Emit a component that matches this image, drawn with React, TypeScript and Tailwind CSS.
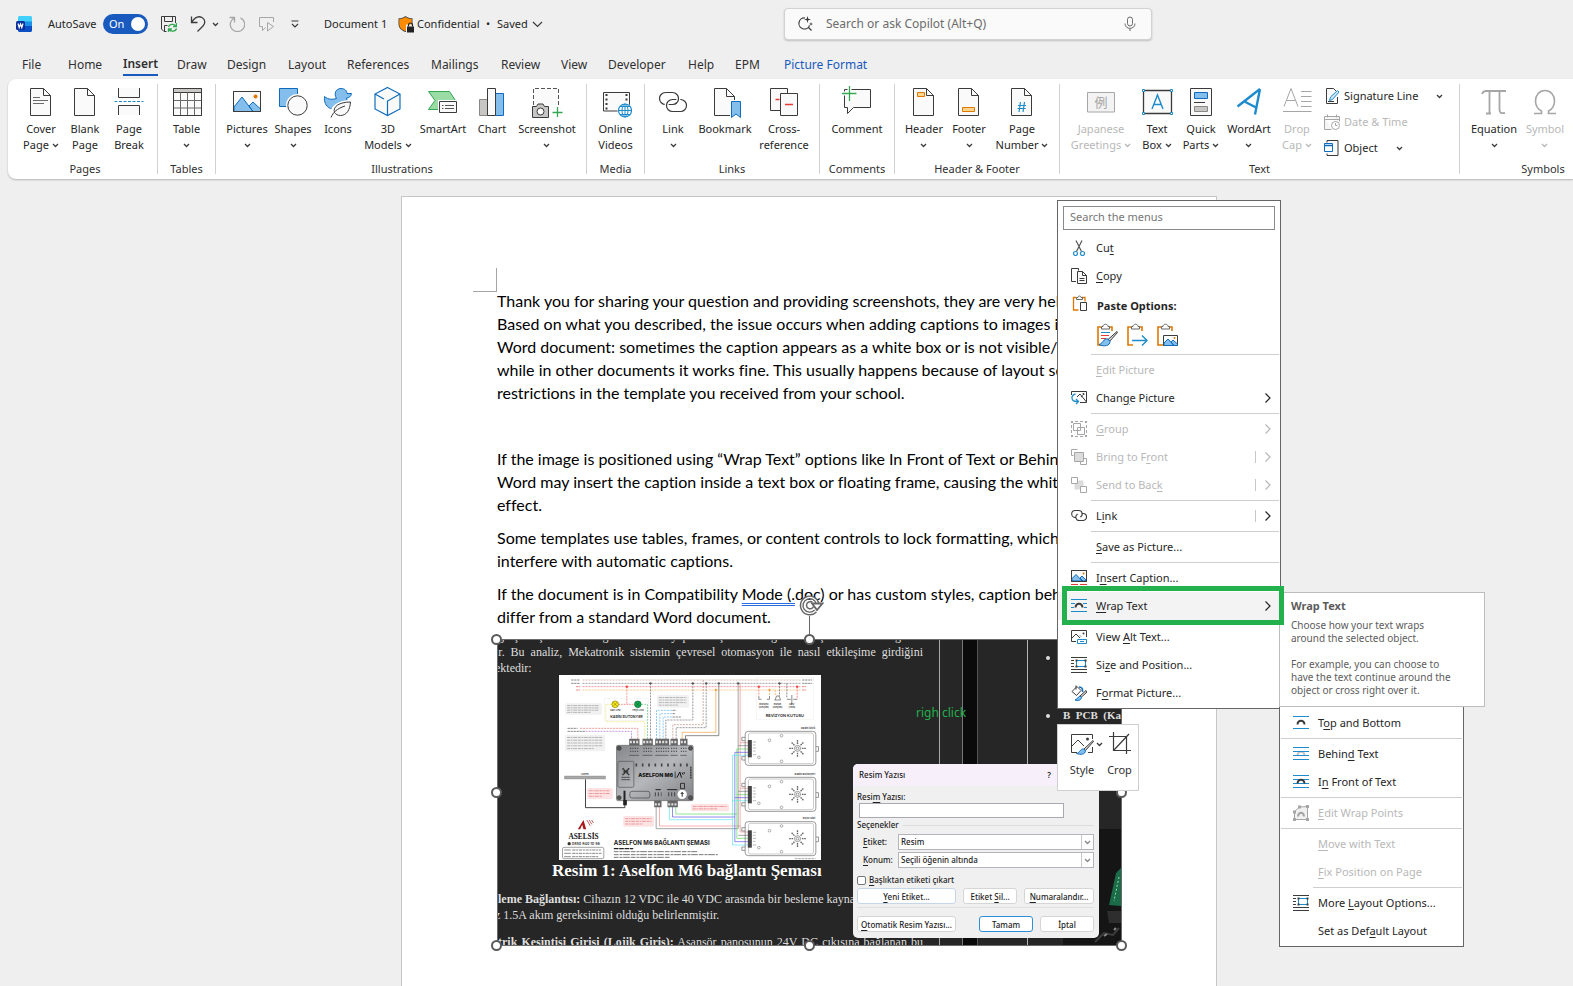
import React from "react";

type Kids = { children?: React.ReactNode };

const INK = "#3b3b3b";
const BLUE = "#1e8bcd";
const DEEP = "#0f6cbd";
const SKY = "#83beec";
const ORANGE = "#e07800";
const GREY = "#a6a6a6";

function Big({ children }: Kids) {
  return (
    <svg width="32" height="32" viewBox="0 0 32 32" fill="none" stroke={INK} strokeWidth="1" aria-hidden="true" className="shrink-0">
      {children}
    </svg>
  );
}

function Small({ children }: Kids) {
  return (
    <svg width="16" height="16" viewBox="0 0 16 16" fill="none" stroke={INK} strokeWidth="1" aria-hidden="true" className="shrink-0">
      {children}
    </svg>
  );
}

function Chevron({ color = INK, wide = false }: { color?: string; wide?: boolean }) {
  return wide ? (
    <svg width="11" height="7" viewBox="0 0 11 7" fill="none" stroke={color} strokeWidth="1.2" aria-hidden="true" className="shrink-0">
      <path d="M1 1l4.5 4.5L10 1" />
    </svg>
  ) : (
    <svg width="7" height="5" viewBox="0 0 7 5" fill="none" stroke={color} strokeWidth="1.3" aria-hidden="true" className="shrink-0">
      <path d="M1 1l2.5 2.5L6 1" />
    </svg>
  );
}

const PAGE = "M5.5 2.5h13l7 7v20h-20z";
const FOLD = "M18.5 2.5v7h7";

const icons = {
  cover: (
    <Big>
      <path d={PAGE} fill="#fafafa" />
      <path d={FOLD} />
      <path d="M8 11.5h7M8 14.5h15M8 17.5h11" stroke="#6b6b6b" />
    </Big>
  ),
  blank: (
    <Big>
      <path d={PAGE} fill="#fafafa" />
      <path d={FOLD} />
    </Big>
  ),
  pageBreak: (
    <Big>
      <path d="M5.5 2v9.5h21V2" fill="#fafafa" />
      <path d="M5.5 29v-9.5h21V29" fill="#fafafa" />
      <path d="M1.5 15.5h29" stroke={BLUE} strokeDasharray="3 1.5" />
    </Big>
  ),
  table: (
    <Big>
      <path d="M2.5 2.5h28v27h-28z" fill="#fafafa" />
      <path d="M2.5 2.5h28v4h-28z" fill="#c8c6c4" />
      <path d="M2.5 14.5h28M2.5 22h28M9.5 6.5v23M16.5 6.5v23M23.5 6.5v23" stroke="#6b6b6b" />
      <path d="M2.5 2.5h28v27h-28z" />
    </Big>
  ),
  pictures: (
    <Big>
      <path d="M2.5 5.5h27v20h-27z" fill="#fafafa" />
      <path d="M3 21l8-10 11 14.5H3zM18 20l4-4 7.5 7v2.5H22z" fill={SKY} stroke={DEEP} />
      <circle cx="24.5" cy="10.5" r="2" fill={ORANGE} stroke="none" />
      <path d="M2.5 5.5h27v20h-27z" />
    </Big>
  ),
  shapes: (
    <Big>
      <path d="M2.5 2.5h18v18h-18z" fill={SKY} stroke={DEEP} />
      <circle cx="20.5" cy="19.5" r="11.5" fill="#fff" stroke="none" />
      <circle cx="20.5" cy="19.5" r="9.7" fill="#fafafa" />
    </Big>
  ),
  icons: (
    <Big>
      <path d="M2.5 10.5c4 3.5 8 3 12 2-3-5-.5-10 4.5-10 4 0 6 2.5 6 5h4.5c-.5 3-2.5 4.5-5 4.5 1 3 .5 5-1 7-3 4-10 5.5-15 3.5-5-2-6.5-7-6-12z" fill={SKY} stroke={DEEP} />
      <path d="M9.5 31c-1-10 7-15.5 20-15.5-1 9-5 14-10.5 14-3.5 0-5-1-6.5-3" fill="#fff" stroke="#fff" strokeWidth="3" />
      <path d="M12.5 26.5c-2-6 5-10.5 16-10.5-.5 8-4 13.5-10 13.5-3 0-4.5-1.2-6-3z" fill="#fafafa" />
      <path d="M9 31.5c2-5 6-9 14-11.5" />
    </Big>
  ),
  cube: (
    <Big>
      <path d="M15.5 1.5l12.5 6.5v15l-12.5 6.5L3 23V8z" fill="#fafafa" stroke={DEEP} strokeWidth="1.2" />
      <path d="M3 8l9 5M28 8l-12.5 7v14.5" stroke={DEEP} strokeWidth="1.2" />
    </Big>
  ),
  smartArt: (
    <Big>
      <path d="M1.5 5.5h21l6 9-6 9h-21l6.5-9z" fill="#9bdca6" stroke="#33a852" />
      <path d="M11 14h21v15H11z" fill="#fff" stroke="none" />
      <path d="M12.5 15.5h17v11h-17z" fill="#fafafa" />
      <path d="M15 19.5h1.5M15 22.5h1.5M18 19.5h9M18 22.5h9" stroke="#555" />
    </Big>
  ),
  chart: (
    <Big>
      <path d="M3.5 13.5h8v16h-8z" fill="#c8c6c4" stroke="#8a8886" />
      <path d="M19.5 7.5h8v22h-8z" fill={SKY} stroke={DEEP} />
      <path d="M11.5 2.5h8v27h-8z" fill="#fafafa" />
    </Big>
  ),
  screenshot: (
    <Big>
      <path d="M2.5 19V2.5h25V19" fill="#fafafa" stroke="#555" strokeDasharray="4 2" />
      <path d="M1.5 20.5h4l1.5-2.5h5l1.5 2.5h4v11h-16z" fill="#c8c6c4" />
      <circle cx="9.5" cy="25.5" r="3.5" fill="#fff" />
      <path d="M21.5 26.5h10M26.5 21v10" stroke="#33a852" strokeWidth="1.3" />
    </Big>
  ),
  video: (
    <Big>
      <path d="M3.5 6.5h26v18.5h-26z" fill="#fafafa" />
      <path d="M6.5 8v16M26.5 8v8" strokeWidth="2" strokeDasharray="2 2.5" />
      <circle cx="25" cy="24.5" r="7.5" fill="#fff" stroke="none" />
      <circle cx="25" cy="24.5" r="6.5" fill="#fff" stroke={BLUE} strokeWidth="1.2" />
      <path d="M18.5 24.5h13M25 18v13M20 20.5h10M20 28.5h10" stroke={BLUE} />
      <ellipse cx="25" cy="24.5" rx="3" ry="6.5" stroke={BLUE} />
    </Big>
  ),
  link: (
    <Big>
      <rect x="2.5" y="6.5" width="19" height="12" rx="6" strokeWidth="1.2" />
      <rect x="9.5" y="13.5" width="20" height="12" rx="6" stroke="#fff" strokeWidth="4" />
      <rect x="9.5" y="13.5" width="20" height="12" rx="6" strokeWidth="1.2" />
      <path d="M15.5 6.5a6 6 0 0 1 6 6c0 2-.8 3.5-2 4.5" stroke="#fff" strokeWidth="4" />
      <path d="M14.5 6.5h1a6 6 0 0 1 6 6c0 2.5-1.5 4.5-3.5 5.5" strokeWidth="1.2" />
    </Big>
  ),
  bookmark: (
    <Big>
      <path d="M5.5 2.5h12l8 8v19h-20z" fill="#fafafa" />
      <path d="M17.5 2.5v8h8" />
      <path d="M21 14h12v18H21z" fill="#fff" stroke="none" />
      <path d="M22.5 15.5h9v16l-4.5-3.5-4.5 3.5z" fill={SKY} stroke={DEEP} />
    </Big>
  ),
  crossRef: (
    <Big>
      <path d="M2.5 2.5h17v22h-17z" fill="#fafafa" />
      <path d="M7.5 13.5h4" stroke="#e53935" strokeWidth="1.3" />
      <path d="M12.5 7.5h17v22h-17z" fill="#fafafa" />
      <path d="M17 18.5h8" stroke="#e53935" strokeWidth="1.3" />
    </Big>
  ),
  comment: (
    <Big>
      <path d="M3.5 3.5h26v18h-17l-6 6v-6h-3z" fill="#fafafa" />
      <path d="M2 7.5h14M8.5 1v14" stroke="#fff" strokeWidth="4" />
      <path d="M1 7.5h14.5M8.5 0v15" stroke="#33a852" strokeWidth="1.3" />
    </Big>
  ),
  header: (
    <Big>
      <path d={PAGE} fill="#fafafa" />
      <path d={FOLD} />
      <path d="M9.5 6.5h7v4h-7z" fill="#fbd58b" stroke={ORANGE} />
    </Big>
  ),
  footer: (
    <Big>
      <path d={PAGE} fill="#fafafa" />
      <path d={FOLD} />
      <path d="M9.5 21.5h12v4h-12z" fill="#fbd58b" stroke={ORANGE} />
    </Big>
  ),
  pageNumber: (
    <Big>
      <path d={PAGE} fill="#fafafa" />
      <path d={FOLD} />
      <path d="M14.5 16l-1.5 10M18.5 16l-1.5 10M12 19.5h8M11.5 22.5h8" stroke={BLUE} strokeWidth="1.2" />
    </Big>
  ),
  textBox: (
    <Big>
      <path d="M2.5 4.5h28v23h-28z" fill="#fafafa" strokeWidth="1.3" />
      <path d="M11 23l5.5-14 5.5 14M12.5 18.5h8" stroke={BLUE} strokeWidth="1.4" />
      <path d="M1.5 3.5h2v2h-2zM29.5 3.5h2v2h-2zM1.5 26.5h2v2h-2zM29.5 26.5h2v2h-2z" fill="#fff" stroke={BLUE} />
    </Big>
  ),
  quickParts: (
    <Big>
      <path d="M5.5 2.5h21v27h-21z" fill="#fafafa" />
      <path d="M9.5 6.5h13v6h-13z" fill={SKY} stroke={DEEP} />
      <path d="M9 16.5h11" />
      <path d="M9.5 20.5h13v5h-13z" fill="#c8c6c4" stroke="#8a8886" />
    </Big>
  ),
  wordArt: (
    <Big>
      <path d="M4.5 20.5L27 3M27 3l-5 25.5M11.5 15.5l12.5 6.5" stroke={BLUE} strokeWidth="2.4" />
    </Big>
  ),
  dropCap: (
    <Big>
      <path d="M3 20.5l7-18 7 18M5.5 14.5h9M20 5.5h10.5M20 10.5h10.5M20 15.5h10.5M20 20.5h10.5M2 25.5h28.5" stroke={GREY} />
    </Big>
  ),
  pi: (
    <Big>
      <path d="M4 8c1-2.5 2-3 4-3h20M11.5 5v22.5M8 27.5h5M21.5 5v19c0 3 2 3.5 5.5 3" stroke={GREY} strokeWidth="1.8" />
    </Big>
  ),
  omega: (
    <Big>
      <path d="M5 27.5h7.5v-2.5c-4-2-6-5.5-6-10 0-6 4-10.5 9.5-10.5s9.5 4.5 9.5 10.5c0 4.5-2 8-6 10v2.5H27" stroke={GREY} strokeWidth="1.6" />
    </Big>
  ),
  japanese: (
    <Big>
      <path d="M2.5 6.5h27v19.5h-27z" fill="#f3f3f3" stroke={GREY} />
      <text x="16" y="21" fontSize="13" textAnchor="middle" fill={GREY} stroke="none" fontFamily="'Noto Sans CJK JP', sans-serif">例</text>
    </Big>
  ),
};

type Tool = {
  lines: string[];
  icon: React.ReactNode;
  w: string;
  chevron?: "inline" | "below";
  off?: boolean;
};

function ToolButton({ tool }: { tool: Tool }) {
  const tone = tool.off ? "text-[#b8b8b8]" : "text-[#262626]";
  const last = tool.lines.length - 1;
  return (
    <button type="button" disabled={tool.off} className={`flex shrink-0 flex-col items-center whitespace-nowrap ${tool.w} ${tone}`}>
      {tool.icon}
      <span className="mt-[3px] flex flex-col items-center leading-4">
        {tool.lines.map((line, i) => (
          <span key={line} className="flex h-4 items-center gap-[3px]">
            {line}
            {i === last && tool.chevron === "inline" && <Chevron color={tool.off ? "#b8b8b8" : INK} />}
          </span>
        ))}
        {tool.chevron === "below" && (
          <span className="flex h-4 items-center">
            <Chevron color={tool.off ? "#b8b8b8" : INK} />
          </span>
        )}
      </span>
    </button>
  );
}

type GroupDef = { name: string; box: string; tools: Tool[]; extra?: React.ReactNode };

const textExtras = (
  <div className="-mt-[3px] ml-1 flex flex-col text-[#262626]">
    <button type="button" className="flex h-[26px] shrink-0 items-center gap-1 whitespace-nowrap">
      <Small>
        <path d="M9.5.5H2.5v15h11V9M9.5.5l3 3" fill="#fafafa" />
        <path d="M5.5 12.5l1-3.5 7-6.5 1.5 1.5-6.5 7.5z" fill="#cde6f7" stroke={BLUE} />
        <path d="M4 13.5h6" />
      </Small>
      <span className="w-[88px] text-left">Signature Line</span>
      <Chevron />
    </button>
    <button type="button" disabled className="flex h-[26px] shrink-0 items-center gap-1 whitespace-nowrap text-[#b8b8b8]">
      <Small>
        <path d="M.5 2.5h15v5M.5 2.5v13h7M.5 5.5h15M3.5.5v3M12.5.5v3" fill="#f5f5f5" stroke={GREY} />
        <circle cx="11.5" cy="11.5" r="4" fill="#fff" stroke={GREY} />
        <path d="M11.5 9v2.5h2" stroke={GREY} />
      </Small>
      Date &amp; Time
    </button>
    <button type="button" className="flex h-[26px] shrink-0 items-center gap-1 whitespace-nowrap">
      <Small>
        <path d="M3 2.5V.5h11v15H3v-2" fill="#fafafa" />
        <path d="M.5 3.5h8v8h-8z" fill="#fff" stroke={DEEP} />
        <path d="M.5 5.5h8" stroke={DEEP} strokeWidth="1.5" />
      </Small>
      <span className="w-12 text-left">Object</span>
      <Chevron />
    </button>
  </div>
);

const groups: GroupDef[] = [
  {
    name: "Pages",
    box: "w-[149px] pl-[5px]",
    tools: [
      { lines: ["Cover", "Page"], icon: icons.cover, w: "w-11", chevron: "inline" },
      { lines: ["Blank", "Page"], icon: icons.blank, w: "w-11" },
      { lines: ["Page", "Break"], icon: icons.pageBreak, w: "w-11" },
    ],
  },
  { name: "Tables", box: "w-[57px]", tools: [{ lines: ["Table"], icon: icons.table, w: "w-11", chevron: "below" }] },
  {
    name: "Illustrations",
    box: "w-[370px] pl-[2px]",
    tools: [
      { lines: ["Pictures"], icon: icons.pictures, w: "w-[46px]", chevron: "below" },
      { lines: ["Shapes"], icon: icons.shapes, w: "w-[46px]", chevron: "below" },
      { lines: ["Icons"], icon: icons.icons, w: "w-11" },
      { lines: ["3D", "Models"], icon: icons.cube, w: "w-14", chevron: "inline" },
      { lines: ["SmartArt"], icon: icons.smartArt, w: "w-[54px]" },
      { lines: ["Chart"], icon: icons.chart, w: "w-11" },
      { lines: ["Screenshot"], icon: icons.screenshot, w: "w-[66px]", chevron: "below" },
    ],
  },
  { name: "Media", box: "w-[57px]", tools: [{ lines: ["Online", "Videos"], icon: icons.video, w: "w-11" }] },
  {
    name: "Links",
    box: "w-[174px]",
    tools: [
      { lines: ["Link"], icon: icons.link, w: "w-[42px]", chevron: "below" },
      { lines: ["Bookmark"], icon: icons.bookmark, w: "w-[62px]" },
      { lines: ["Cross-", "reference"], icon: icons.crossRef, w: "w-14" },
    ],
  },
  { name: "Comments", box: "w-[74px]", tools: [{ lines: ["Comment"], icon: icons.comment, w: "w-16" }] },
  {
    name: "Header & Footer",
    box: "w-[164px]",
    tools: [
      { lines: ["Header"], icon: icons.header, w: "w-[46px]", chevron: "below" },
      { lines: ["Footer"], icon: icons.footer, w: "w-11", chevron: "below" },
      { lines: ["Page", "Number"], icon: icons.pageNumber, w: "w-[62px]", chevron: "inline" },
    ],
  },
  {
    name: "Text",
    box: "w-[399px]",
    tools: [
      { lines: ["Japanese", "Greetings"], icon: icons.japanese, w: "w-[70px]", chevron: "inline", off: true },
      { lines: ["Text", "Box"], icon: icons.textBox, w: "w-[42px]", chevron: "inline" },
      { lines: ["Quick", "Parts"], icon: icons.quickParts, w: "w-[46px]", chevron: "inline" },
      { lines: ["WordArt"], icon: icons.wordArt, w: "w-[50px]", chevron: "below" },
      { lines: ["Drop", "Cap"], icon: icons.dropCap, w: "w-[46px]", chevron: "inline", off: true },
    ],
    extra: textExtras,
  },
  {
    name: "Symbols",
    box: "w-[166px]",
    tools: [
      { lines: ["Equation"], icon: icons.pi, w: "w-[54px]", chevron: "below" },
      { lines: ["Symbol"], icon: icons.omega, w: "w-12", chevron: "below", off: true },
      { lines: ["Number"], icon: <Big />, w: "w-[50px]", off: true },
    ],
  },
];

function Ribbon() {
  return (
    <div className="ml-2 flex h-[100px] shrink-0 overflow-hidden rounded-l-lg bg-white text-[11px] shadow-[0_1px_2px_rgba(0,0,0,0.25)]">
      {groups.map((g, i) => (
        <React.Fragment key={g.name}>
          {i > 0 && <div className="my-[5px] w-px shrink-0 bg-[#d1d1d1]" />}
          <section aria-label={g.name} className={`flex shrink-0 flex-col pt-[7px] ${g.box}`}>
            <div className={`flex h-[75px] ${g.extra ? "pl-[6px]" : "justify-center"}`}>
              {g.tools.map((t) => (
                <ToolButton key={t.lines.join(" ")} tool={t} />
              ))}
              {g.extra}
            </div>
            <div className="text-center leading-4 text-[#303030]">{g.name}</div>
          </section>
        </React.Fragment>
      ))}
    </div>
  );
}

function TitleBar() {
  return (
    <header className="flex h-12 shrink-0 items-center text-[11px] text-[#262626]">
      <div className="flex w-[784px] shrink-0 items-center pl-4">
        <svg width="16" height="16" viewBox="0 0 16 16" aria-label="Word">
          <path d="M2 1.5C2 .7 2.7 0 3.5 0h11c.8 0 1.5.7 1.5 1.5V6H2z" fill="#41d0fb" />
          <path d="M2 5.5h14v5H2z" fill="#1d8fe8" />
          <path d="M2 10h14v4.5c0 .8-.7 1.5-1.5 1.5h-11C2.7 16 2 15.3 2 14.5z" fill="#0a4fc4" />
          <rect y="5" width="9" height="9" rx="1.5" fill="#0b2f9c" />
          <path d="M2 7.5l1.2 4 1.3-3.5 1.3 3.5 1.2-4" fill="none" stroke="#fff" strokeWidth="1.2" />
        </svg>
        <span className="ml-4 w-[55px] whitespace-nowrap">AutoSave</span>
        <button type="button" role="switch" aria-checked="true" aria-label="AutoSave" className="flex h-5 w-[45px] items-center justify-between rounded-full bg-[#185abd] pr-[3px] pl-[6px] text-white">
          On
          <span className="h-3.5 w-3.5 rounded-full bg-white" />
        </button>
        <button type="button" aria-label="Save" className="ml-[13px]">
          <Small>
            <path d="M5.500 15.500H3l-2.500-2.500V.5h14v6.500M3.500.5v5h8v-5M3.500 15V9.500h3" />
            <path d="M7.500 11c.5-2.500 5-4 7.500-1M15.500 7v3.500h-3.500M15.500 12.500c-.5 2.500-5 4-7.500 1M7.500 16.500v-3.500H11" stroke="#33a852" strokeWidth="1.3" />
          </Small>
        </button>
        <button type="button" aria-label="Undo" className="ml-[13px] flex items-center gap-[6px]">
          <Small>
            <path d="M1.5.5v6h6M1.5 6.5C5 1 9 0 12 1.5c3.5 2 3.5 6 1 8.5L7.5 15.5" strokeWidth="1.3" />
          </Small>
          <Chevron />
        </button>
        <button type="button" aria-label="Repeat" className="ml-[10px]">
          <Small>
            <path d="M.5 1.5h5v5M5.500 1.800A7.200 7.200 0 1 0 11.500 1.800" stroke={GREY} strokeWidth="1.3" />
          </Small>
        </button>
        <button type="button" aria-label="Present" className="ml-[14px]">
          <Small>
            <path d="M14.5 6V1.5H.5v9h3v4l3-3" stroke={GREY} />
            <path d="M8.5 6.5l6 4-6 4.5z" stroke={GREY} />
          </Small>
        </button>
        <button type="button" aria-label="Customize Quick Access Toolbar" className="ml-4">
          <svg width="8" height="8" viewBox="0 0 8 8" fill="none" stroke={INK} strokeWidth="1.2" aria-hidden="true">
            <path d="M.5 1h7M1 4l3 3 3-3" />
          </svg>
        </button>
        <span className="ml-[25px] w-[74px] pt-px whitespace-nowrap">Document 1</span>
        <svg width="16" height="17" viewBox="0 0 16 17" aria-hidden="true">
          <path d="M7.5 0C9.5 1.8 12 2.2 14.5 2.3V8c0 4-3 6.5-7 8-4-1.500-7-4-7-8V2.300C3 2.200 5.500 1.800 7.500 0z" fill="#444" />
          <path d="M7.5 1C9.5 2.6 11.5 3 13.7 3.1V8c0 3.6-2.7 5.800-6.200 7.100C4 13.800 1.300 11.600 1.300 8V3.100C3.500 3 5.500 2.600 7.500 1z" fill="#ff8c00" />
          <path d="M8 8.5h8V17H8z" fill="#f0f0f0" />
          <rect x="9" y="10.5" width="7" height="6" fill="#222" />
          <path d="M10.5 10.5V9a2 2 0 0 1 4 0v1.5" fill="none" stroke="#222" strokeWidth="1.2" />
        </svg>
        <span className="ml-[3px] w-[69px] pt-px whitespace-nowrap">Confidential</span>
        <span className="w-[11px] pt-px">•</span>
        <button type="button" className="flex items-center gap-1 pt-px">
          Saved
          <Chevron wide />
        </button>
      </div>
      <label className="flex h-8 w-[368px] items-center rounded-[4px] border border-[#d2d2d2] bg-[#fafafa] px-3 shadow-[0_1px_2px_rgba(0,0,0,0.2)]">
        <Small>
          <path d="M8 2A5.5 5.5 0 1 0 12.5 9.5M11.5 11.5l3 3" strokeWidth="1.2" />
          <path d="M10.5 0l.8 2.7L14 3.5l-2.7.8L10.5 7l-.8-2.7L7 3.5l2.7-.8zM14 6l.5 1.5L16 8l-1.5.5L14 10l-.5-1.5L12 8l1.5-.5z" fill={INK} stroke="none" />
        </Small>
        <input aria-label="Search or ask Copilot" placeholder="Search or ask Copilot (Alt+Q)" className="ml-[13px] min-w-0 flex-1 bg-transparent text-[12px] outline-none placeholder:text-[#6b6b6b]" />
        <svg width="12" height="16" viewBox="0 0 12 16" fill="none" stroke="#6b6b6b" aria-hidden="true" className="mr-[3px]">
          <rect x="3.5" y="1" width="5" height="9" rx="2.5" />
          <path d="M1 7.5c0 6.5 10 6.5 10 0M6 12.5V15" />
        </svg>
      </label>
    </header>
  );
}

const tabs: [string, string][] = [
  ["File", "w-[46px]"],
  ["Home", "w-[55px]"],
  ["Insert", "w-[54px]"],
  ["Draw", "w-[50px]"],
  ["Design", "w-[61px]"],
  ["Layout", "w-[59px]"],
  ["References", "w-[84px]"],
  ["Mailings", "w-[70px]"],
  ["Review", "w-[60px]"],
  ["View", "w-[47px]"],
  ["Developer", "w-[80px]"],
  ["Help", "w-[47px]"],
  ["EPM", "w-[49px]"],
  ["Picture Format", "w-[100px]"],
];

function Tabs() {
  return (
    <nav className="flex h-[31px] shrink-0 items-start pl-[22px] text-[12px] text-[#303030]">
      {tabs.map(([name, w]) => (
        <div key={name} className={`shrink-0 ${w}`}>
          <button
            type="button"
            className={
              name === "Insert"
                ? "block h-7 border-b-2 border-[#185abd] pt-[5px] leading-[22px] font-semibold"
                : name === "Picture Format"
                  ? "block h-7 pt-[5px] leading-[22px] whitespace-nowrap text-[#185abd]"
                  : "block h-7 pt-[5px] leading-[22px]"
            }
          >
            {name}
          </button>
        </div>
      ))}
    </nav>
  );
}

/* Menu labels mark their access key with an ampersand. */
function Mnemonic({ text }: { text: string }) {
  const at = text.indexOf("&");
  if (at < 0) return <>{text}</>;
  return (
    <span>
      {text.slice(0, at)}
      <u className="underline underline-offset-2">{text[at + 1]}</u>
      {text.slice(at + 2)}
    </span>
  );
}

function Arrow({ off }: { off?: boolean }) {
  return (
    <svg width="6" height="10" viewBox="0 0 6 10" fill="none" stroke={off ? "#b8b8b8" : "#262626"} strokeWidth="1.2" aria-hidden="true">
      <path d="M.5.5L5 5 .5 9.5" />
    </svg>
  );
}

type Entry = { text: string; icon?: React.ReactNode; off?: boolean; arrow?: boolean; split?: boolean; hot?: boolean };

function MenuItem({ e }: { e: Entry }) {
  return (
    <button
      type="button"
      role="menuitem"
      disabled={e.off}
      className={`flex h-7 w-full items-center pr-[9px] pl-[13px] text-left whitespace-nowrap ${e.off ? "text-[#b8b8b8]" : "text-[#262626]"} ${e.hot ? "bg-[#f3f3f3]" : ""}`}
    >
      <span className="mr-[9px] h-4 w-4 shrink-0">{e.icon}</span>
      <span className="flex-1">
        <Mnemonic text={e.text} />
      </span>
      {e.split && <span className="mr-[9px] h-3 w-px bg-[#c8c8c8]" />}
      {e.arrow && <Arrow off={e.off} />}
    </button>
  );
}

function Rule({ inset = true }: { inset?: boolean }) {
  return (
    <div role="separator" className={`flex h-[3px] items-center pr-px ${inset ? "pl-[33px]" : "pl-px"}`}>
      <div className="h-px flex-1 bg-[#cfcfcf]" />
    </div>
  );
}

const arch = "M4.5 9.5C5 4.500 11 4.500 11.500 9.500";

const mi = {
  cut: (
    <Small>
      <path d="M5 .5l5.5 11M11 .5L5.5 11.5" stroke="#555" strokeWidth="1.2" />
      <circle cx="4.5" cy="13.5" r="2" stroke={BLUE} strokeWidth="1.2" />
      <circle cx="11.5" cy="13.5" r="2" stroke={BLUE} strokeWidth="1.2" />
    </Small>
  ),
  copy: (
    <Small>
      <path d="M5 13.5H.5V.5h7v2" />
      <path d="M6.5 3.5h5l4 4v8h-9zM11.5 3.5v4h4M8.5 10.5h5M8.5 12.5h5" fill="#fafafa" />
    </Small>
  ),
  paste: (
    <Small>
      <path d="M5 2.5H2.5v12.5h5M11 2.5h3v4" stroke={ORANGE} strokeWidth="1.3" />
      <path d="M5.5 4.5v-2h1.5c0-2 3-2 3 0h1.5v2z" fill="#fff" stroke="#666" />
      <path d="M9.5 7.5h6v8h-6z" fill="#fff" />
    </Small>
  ),
  change: (
    <Small>
      <path d="M.5 5V1.5h15v11H9M6 7l3-3 6.5 8M10 7l2-1.5" />
      <circle cx="12.5" cy="4" r="1" fill={INK} stroke="none" />
      <path d="M4.5 4C1 4.5 0 8 2 10.5c1 1 3 1 5.5 1M5 9l2.5 2.5L5 14" stroke={BLUE} strokeWidth="1.3" />
    </Small>
  ),
  group: (
    <Small>
      <path d="M2.5 2.5h7v7h-7zM6.5 6.5h7v7h-7z" stroke={GREY} />
      <path d="M0 0h2v2H0zM14 0h2v2h-2zM0 14h2v2H0zM14 14h2v2h-2zM4 0h3v1H4zM9 0h3v1H9zM4 15h3v1H4zM9 15h3v1H9zM0 4h1v3H0zM0 9h1v3H0zM15 4h1v3h-1zM15 9h1v3h-1z" fill={GREY} stroke="none" />
    </Small>
  ),
  front: (
    <Small>
      <path d="M6.5.5h-6v6h2M13 9.5h2.5v6h-6V13" stroke={GREY} />
      <path d="M3.5 3.5h9v9h-9z" fill="#dcdcdc" stroke={GREY} />
    </Small>
  ),
  back: (
    <Small>
      <path d="M3.5 3.5h9v9h-9z" fill="#dcdcdc" stroke="none" />
      <path d="M.5.5h6v6h-6zM9.5 9.5h6v6h-6z" fill="#fff" stroke={GREY} />
    </Small>
  ),
  link: (
    <Small>
      <path d="M5 9.5H4.200a3.5 3.5 0 0 1 0-7h3.600a3.5 3.5 0 0 1 1.5 6.6" strokeWidth="1.1" />
      <path d="M11 5.5h1a3.5 3.5 0 0 1 0 7H8.200a3.5 3.5 0 0 1-1.500-6.600" strokeWidth="1.1" />
    </Small>
  ),
  caption: (
    <Small>
      <path d="M.5.5h15v11H.5z" fill="#fafafa" />
      <path d="M1 8.500l4-4 6 6.500H1zM9 8l2-2 4 4v1H12z" fill={SKY} stroke={DEEP} />
      <circle cx="12.5" cy="3.5" r="1" fill={ORANGE} stroke="none" />
      <path d="M.5.5h15v11H.5z" />
      <path d="M0 14.5h7M9 14.5h7" stroke="#e53935" strokeWidth="1.2" />
    </Small>
  ),
  wrap: (
    <Small>
      <path d="M0 1.500h16M0 5.500h4M12 5.500h4M0 9.500h3M13 9.500h3M0 13.500h16" stroke={BLUE} />
      <path d={arch} strokeWidth="2" />
    </Small>
  ),
  alt: (
    <Small>
      <path d="M5 12.5H.5v-11h15V8M1 9l4-4 4 4M9 6.5l1 1" />
      <circle cx="12.5" cy="4.5" r="1" fill={INK} stroke="none" />
      <path d="M6.5 10.5h9v4h-9zM9 12.5h4" fill="#fff" stroke={BLUE} />
    </Small>
  ),
  size: (
    <Small>
      <path d="M0 .5h16M0 3.5h3M0 6.5h3M0 9.5h3M0 12.5h16M0 15.5h16" />
      <path d="M5.5 3.5h9v6h-9z" fill="#fff" stroke={BLUE} />
      <path d="M4.5 2.5h2v2h-2zM13.5 2.5h2v2h-2zM4.5 8.5h2v2h-2zM13.5 8.5h2v2h-2z" fill={INK} stroke="none" />
    </Small>
  ),
  format: (
    <Small>
      <path d="M1 6.5L6 1.5l4 4-4.5 5zM5 .5v4" />
      <path d="M8 2c3 0 4 2 3.5 5" stroke={DEEP} strokeWidth="1.6" />
      <path d="M15 5.5l-6 5.5 1 1.5 6-5.5z" fill="#ddd" />
      <path d="M9 11c-2 .5-2 3-5 4 3 1 6 .5 6.5-2.5z" fill={SKY} stroke={DEEP} />
    </Small>
  ),
  topBottom: (
    <Small>
      <path d="M0 1.5h16M0 13.5h16" stroke={BLUE} strokeWidth="1.1" />
      <path d={arch} strokeWidth="2" />
    </Small>
  ),
  behind: (
    <Small>
      <path d={arch} stroke="#c4c4c4" strokeWidth="2" />
      <path d="M0 1.5h16M0 5.5h16M0 9.5h16M0 13.5h16" stroke={BLUE} strokeWidth="1.1" />
    </Small>
  ),
  inFront: (
    <Small>
      <path d="M0 1.5h16M0 5.5h16M0 9.5h16M0 13.5h16" stroke={BLUE} strokeWidth="1.1" />
      <path d={arch} strokeWidth="2" />
    </Small>
  ),
  points: (
    <Small>
      <path d="M1.5 14.5V6.5l5-4.5 8-.5v13z" fill="#f0f0f0" stroke={GREY} />
      <path d="M0 5.5h3v3H0zM5 .5h3v3H5zM13 0h3v3h-3zM0 13h3v3H0zM13 13h3v3h-3z" fill={GREY} stroke="none" />
      <path d="M5 11.5C5.500 6.500 10.500 6.500 11 11.500" stroke={GREY} strokeWidth="2" />
    </Small>
  ),
};

function PasteIcon({ kind }: { kind: "format" | "merge" | "picture" }) {
  return (
    <button type="button" aria-label={`Paste ${kind}`} className="h-6 w-6">
      <svg width="24" height="24" viewBox="0 0 24 24" fill="none" stroke={INK} aria-hidden="true">
        <path d="M6 4H3v18h5M14 4h3v4" stroke={ORANGE} strokeWidth="1.6" />
        <path d="M6.5 6V3.5H8c0-3 5-3 5 0h1.5V6z" fill="#fff" stroke="#666" />
        {kind === "format" && (
          <>
            <path d="M6 9.5h9M6 12.5h3" stroke={BLUE} />
            <path d="M6 12.5h8M6 15.5h5" stroke="#e53935" />
            <path d="M22 8.5l-9 8 1.5 2 8-9z" fill="#ddd" />
            <path d="M13 16c-5-1-4 4-9 5.5 5 2.5 11 1.5 11-3z" fill={SKY} stroke={DEEP} />
          </>
        )}
        {kind === "merge" && <path d="M7 17.5h14M17 12.5l5 5-5 5" stroke={BLUE} strokeWidth="1.4" />}
        {kind === "picture" && (
          <>
            <path d="M8.5 12.5h14v10h-14z" fill="#fff" />
            <path d="M9 20l4-4 6 6.5H9zM16 19l2-2 4.5 4v1.5H19z" fill={SKY} stroke={DEEP} />
            <circle cx="19.5" cy="15" r="1" fill={ORANGE} stroke="none" />
          </>
        )}
      </svg>
    </button>
  );
}

function ContextMenu() {
  return (
    <div role="menu" className="absolute top-1 left-[656px] w-56 border border-[#666] bg-white pt-[5px] pb-px text-[11px]">
      <div className="px-[5px]">
        <input aria-label="Search the menus" placeholder="Search the menus" className="block h-6 w-full border border-[#8a8a8a] px-[6px] pb-1 text-[11px] outline-none placeholder:text-[#767676]" />
      </div>
      <div className="pt-1">
        <MenuItem e={{ text: "Cu&t", icon: mi.cut }} />
        <MenuItem e={{ text: "&Copy", icon: mi.copy }} />
        <div className="flex h-8 items-start pt-[5px] pl-[13px] leading-[22px] font-bold text-[#262626]">
          <span className="mr-[10px] h-4 w-4 shrink-0">{mi.paste}</span>
          Paste Options:
        </div>
        <div className="flex h-[31px] items-start gap-[6px] pt-px pl-[37px]">
          <PasteIcon kind="format" />
          <PasteIcon kind="merge" />
          <PasteIcon kind="picture" />
        </div>
        <Rule />
        <MenuItem e={{ text: "&Edit Picture", off: true }} />
        <MenuItem e={{ text: "Chan&ge Picture", icon: mi.change, arrow: true }} />
        <Rule />
        <MenuItem e={{ text: "&Group", icon: mi.group, off: true, arrow: true }} />
        <MenuItem e={{ text: "Bring to F&ront", icon: mi.front, off: true, arrow: true, split: true }} />
        <MenuItem e={{ text: "Send to Bac&k", icon: mi.back, off: true, arrow: true, split: true }} />
        <Rule />
        <MenuItem e={{ text: "L&ink", icon: mi.link, arrow: true, split: true }} />
        <Rule />
        <MenuItem e={{ text: "&Save as Picture..." }} />
        <Rule />
        <MenuItem e={{ text: "I&nsert Caption...", icon: mi.caption }} />
        <MenuItem e={{ text: "&Wrap Text", icon: mi.wrap, arrow: true, hot: true }} />
        <Rule />
        <MenuItem e={{ text: "View &Alt Text...", icon: mi.alt }} />
        <MenuItem e={{ text: "Si&ze and Position...", icon: mi.size }} />
        <MenuItem e={{ text: "F&ormat Picture...", icon: mi.format }} />
      </div>
    </div>
  );
}

function SubMenu() {
  return (
    <div role="menu" className="absolute top-[510px] left-[878px] w-[185px] border border-[#666] bg-white pt-[2px] pb-px text-[11px]">
      <MenuItem e={{ text: "T&op and Bottom", icon: mi.topBottom }} />
      <Rule inset={false} />
      <MenuItem e={{ text: "Behin&d Text", icon: mi.behind }} />
      <MenuItem e={{ text: "I&n Front of Text", icon: mi.inFront }} />
      <Rule inset={false} />
      <MenuItem e={{ text: "&Edit Wrap Points", icon: mi.points, off: true }} />
      <Rule inset={false} />
      <MenuItem e={{ text: "&Move with Text", off: true }} />
      <MenuItem e={{ text: "&Fix Position on Page", off: true }} />
      <Rule />
      <MenuItem e={{ text: "More &Layout Options...", icon: mi.size }} />
      <MenuItem e={{ text: "Set as Def&ault Layout" }} />
    </div>
  );
}

function Tooltip() {
  return (
    <div role="tooltip" className="absolute top-[396px] left-[878px] h-[115px] w-[206px] border border-[#bdbdbd] bg-white px-[11px] pt-[6px] text-[10px] leading-[13px] text-[#5c5c5c]">
      <h2 className="mb-[7px] text-[11px] font-bold">Wrap Text</h2>
      <p className="mb-[13px] whitespace-nowrap">
        Choose how your text wraps
        <br />
        around the selected object.
      </p>
      <p className="whitespace-nowrap">
        For example, you can choose to
        <br />
        have the text continue around the
        <br />
        object or cross right over it.
      </p>
    </div>
  );
}

function MiniToolbar() {
  return (
    <div role="toolbar" aria-label="Picture" className="absolute top-[528px] left-[656px] flex h-[67px] w-[82px] justify-center border border-[#cfcfcf] bg-white pt-[7px] pl-1 text-[11px] text-[#303030]">
      <button type="button" className="flex w-[39px] flex-col items-center">
        <span className="flex items-center gap-0.5 pl-2">
          <svg width="24" height="24" viewBox="0 0 24 24" fill="none" stroke={INK} aria-hidden="true">
            <path d="M7 20.5H1.5v-18h21V7M22.5 15v5.5H18M2 14l6-6 6 6" />
            <circle cx="17.5" cy="7" r="1.5" fill={INK} stroke="none" />
            <path d="M23 8.5l-9 8.5 1.5 1.5 8-9z" fill="#ddd" />
            <path d="M13.5 17c-3-.5-4 4-7 4.5 4 1.5 9 1 9-3z" fill={SKY} stroke={DEEP} />
          </svg>
          <Chevron />
        </span>
        <span className="mt-[6px] leading-4">Style</span>
      </button>
      <button type="button" className="flex w-9 flex-col items-center">
        <svg width="24" height="24" viewBox="0 0 24 24" fill="none" stroke={INK} strokeWidth="1.2" aria-hidden="true">
          <path d="M5.5 0v18.5H23M1 4.5h17.5V22M6 18L21 2" />
        </svg>
        <span className="mt-[6px] leading-4">Crop</span>
      </button>
    </div>
  );
}

function Device({ y, name }: { y: number; name: string }) {
  const rays = [0, 45, 90, 135, 180, 225, 270, 315];
  return (
    <g transform={`translate(0 ${y})`} stroke="#666" strokeWidth="2" fill="none">
      <text x="1005" y="-6" fontSize="8" fontWeight="700" textAnchor="end" fill="#444" stroke="none">{name}</text>
      <rect x="795" y="2" width="212" height="102" rx="9" />
      <rect x="805" y="7" width="195" height="92" rx="6" stroke="#999" strokeWidth="1.5" />
      <path d="M795 20h-10v10h10M795 78h-10v10h10M1007 48h8v14h-8" />
      <rect x="803" y="28" width="12" height="52" fill="#444" stroke="none" />
      <path d="M818 34h10M818 43h8M818 52h10M818 61h8M818 72h10" stroke="#999" />
      <circle cx="904" cy="15" r="4" stroke="#888" />
      <circle cx="904" cy="92" r="4" stroke="#888" />
      <circle cx="868" cy="29" r="4" stroke="#888" />
      <circle cx="836" cy="80" r="4" stroke="#888" />
      <circle cx="952" cy="53" r="9" />
      <circle cx="952" cy="53" r="4" />
      {rays.map((a) => (
        <path key={a} d="M965 53h12" strokeWidth="4" strokeDasharray="5 2" transform={`rotate(${a} 952 53)`} />
      ))}
    </g>
  );
}

function Note({ x, y, w, h, n, warm }: { x: number; y: number; w: number; h: number; n: number; warm?: boolean }) {
  return (
    <g>
      <rect x={x} y={y} width={w} height={h} rx="5" fill={warm ? "#fde3e3" : "#f1f1f1"} />
      {Array.from({ length: n }, (_, i) => (
        <path key={i} d={`M${x + 6} ${y + ((i + 1) * h) / (n + 1)}h${w - (i === n - 1 ? 40 : 14)}`} stroke={warm ? "#e58a8a" : "#aaa"} strokeWidth="2.5" strokeDasharray="9 2 5 2 12 2" />
      ))}
    </g>
  );
}

function Wiring() {
  return (
    <svg width="262" height="185" viewBox="237 255 785 555" fontFamily="Inter, sans-serif" role="img" aria-label="Wiring diagram" className="block bg-white">
      <g fill="none" strokeWidth="2">
        <path d="M307 270h655" stroke="#c99a88" strokeDasharray="6 3" />
        <path d="M307 280h655" stroke="#777" strokeDasharray="6 3" />
        <path d="M307 290h655M440 290v53M300 415h173v33" stroke="#ef6b6b" strokeDasharray="6 3" />
        <path d="M307 300h655" stroke="#f3b25c" strokeDasharray="6 3" />
        <path d="M511 280v168M638 280v110h-81v58M678 280v133h-90v35" stroke="#666" strokeDasharray="6 3" />
        <path d="M669 270v134h-91v44" stroke="#b08878" strokeDasharray="6 3" />
        <path d="M707 300v127H606v21" stroke="#f0a040" />
        <path d="M716 280v157H616v11" stroke="#555" />
        <path d="M395 343h-18v52h116v53" stroke="#ece65c" strokeDasharray="6 3" />
        <path d="M483 343h19v105" stroke="#58c878" strokeDasharray="6 3" />
        <path d="M575 361h-46v87M575 371h-36v77M575 381h-26v67" stroke="#5aaee8" strokeDasharray="6 3" />
        <path d="M316 424h138v24" stroke="#a070d0" strokeDasharray="6 3" />
        <path d="M415 343h48" stroke="#ef5b5b" strokeDasharray="5 3" />
        <path d="M836 290v28M951 290v38" stroke="#ef5b5b" strokeDasharray="6 3" />
        <path d="M868 300v18M885 300v18" stroke="#f0a040" strokeDasharray="6 3" />
        <path d="M898 280v38M920 280v45" stroke="#555" strokeDasharray="6 3" />
        <path d="M836 318v10h8M868 318v10h-8M885 330l4-12h8l4 12h-18M920 328h12M951 328h-12M935 315v28" stroke="#555" />
        <path d="M780 280v430M538 648v60h242v18h24M780 458h24M780 595h24" stroke="#f28b8b" />
        <path d="M774 280v436M528 648v68h246M774 467h30M774 604h30M774 736h30" stroke="#777" />
        <path d="M587 648v24h183M804 477h-34v268h34M770 614h34" stroke="#5cd65c" />
        <path d="M577 648v33h187M804 487h-40v268h40M764 623h40" stroke="#5b50e8" />
        <path d="M568 648v41h189M804 496h-47v269h47M757 632h47" stroke="#5ee6f2" />
        <path d="M316 568v85h118v-20" stroke="#444" strokeWidth="3" />
      </g>
      <g fill="#555">
        <circle cx="511" cy="280" r="3.5" />
        <circle cx="638" cy="280" r="3.5" />
        <circle cx="678" cy="280" r="3.5" />
        <circle cx="716" cy="280" r="3.5" />
        <circle cx="774" cy="280" r="3.5" />
        <circle cx="898" cy="280" r="3.5" />
        <circle cx="440" cy="290" r="3.5" fill="#ef4444" />
        <circle cx="836" cy="290" r="3.5" fill="#ef4444" />
        <circle cx="951" cy="290" r="3.5" fill="#ef4444" />
        <circle cx="868" cy="300" r="3.5" fill="#f0a040" />
        <circle cx="707" cy="300" r="3.5" fill="#f0a040" />
      </g>
      <g strokeWidth="3" stroke="#888" strokeDasharray="7 2">
        <path d="M273 270h27M273 280h27M966 270h30M966 280h30M262 415h30M262 424h52M577 361h11M577 371h8M577 381h26" />
        <path d="M288 290h12M288 300h12M966 290h12M966 300h12" stroke="#ef7b7b" />
      </g>
      <rect x="374" y="325" width="130" height="67" fill="none" stroke="#e4e4e4" />
      <rect x="829" y="262" width="172" height="126" fill="none" stroke="#e4e4e4" />
      <circle cx="405" cy="343" r="10" fill="#f7ec1d" stroke="#8a7a00" strokeWidth="2" />
      <path d="M399 337l12 12M411 337l-12 12" stroke="#8a7a00" strokeWidth="2" />
      <circle cx="473" cy="343" r="10" fill="#12a84f" stroke="#0b6b30" strokeWidth="2" />
      <path d="M467 337l12 12M479 337l-12 12" stroke="#0b6b30" strokeWidth="2" />
      <g fill="#333" fontSize="8" fontWeight="600" textAnchor="middle">
        <text x="405" y="362">Sarı Led</text>
        <text x="473" y="362">Yeşil Led</text>
        <text x="851" y="345">Butonu</text>
        <text x="851" y="354">(Seçim)</text>
        <text x="892" y="345">Buton</text>
        <text x="892" y="354">(Seçim)</text>
        <text x="935" y="345">REV</text>
        <text x="935" y="354">(Yön)</text>
        <text x="314" y="555">Anten</text>
      </g>
      <text x="439" y="384" fontSize="11" fontWeight="600" textAnchor="middle" fill="#222">KABİN BUTONYER</text>
      <text x="914" y="381" fontSize="12" fontWeight="600" textAnchor="middle" fill="#222">REVİZYON KUTUSU</text>
      <Note x={255} y={340} w={110} h={34} n={4} />
      <Note x={530} y={315} w={97} h={38} n={4} />
      <Note x={255} y={434} w={120} h={50} n={5} />
      <Note x={320} y={594} w={78} h={33} n={3} warm />
      <Note x={632} y={642} w={115} h={22} n={2} warm />
      <Note x={429} y={678} w={93} h={32} n={3} warm />
      <path d="M253 558h123v9H253z" fill="#a8a8a8" stroke="#777" />
      <g>
        <path d="M447 446h31v22h-31zM487 446h31v22h-31zM525 446h42v22h-42zM571 446h22v22h-22zM600 446h22v22h-22zM522 630h22v22h-22zM562 630h31v22h-31z" fill="#666" />
        <path d="M449 456h27M489 456h27M527 456h38M573 456h18M602 456h18M524 643h18M564 643h27" stroke="#ddd" strokeWidth="7" strokeDasharray="6 3.5" />
        <linearGradient id="case" x1="0" y1="0" x2="1" y2="1">
          <stop offset="0" stopColor="#858689" />
          <stop offset=".5" stopColor="#b6b7ba" />
          <stop offset="1" stopColor="#808184" />
        </linearGradient>
        <rect x="409" y="466" width="230" height="166" rx="4" fill="url(#case)" stroke="#666" strokeWidth="2" />
        <g fill="#555" stroke="#333" strokeWidth="2">
          <circle cx="417" cy="475" r="6" />
          <circle cx="631" cy="475" r="6" />
          <circle cx="417" cy="623" r="6" />
          <circle cx="631" cy="623" r="6" />
        </g>
        <rect x="413" y="514" width="48" height="78" rx="4" fill="none" stroke="#555" strokeWidth="2" />
        <path d="M427 535l20 20M447 535l-20 20M430 545h14" stroke="#333" strokeWidth="5" strokeDasharray="5 1" />
        <path d="M424 562h26M424 569h26" stroke="#444" strokeWidth="3" strokeDasharray="7 1" />
        <path d="M450 475h26M490 475h26M528 475h38M573 475h18M602 475h18M450 484h26M490 484h26M528 484h38M573 484h18M602 484h18" stroke="#444" strokeWidth="4" strokeDasharray="3 4" />
        <path d="M447 496h30M487 496h30M525 496h40M571 496h22M600 496h20" stroke="#444" strokeWidth="2" />
        <path d="M466 525h160" stroke="#444" strokeWidth="9" strokeDasharray="5 14" />
        <rect x="449" y="604" width="60" height="20" rx="6" fill="none" stroke="#444" strokeWidth="2" />
        <path d="M526 599h16M561 599h30" stroke="#222" strokeWidth="3" />
        <path d="M524 613h20M564 613h26" stroke="#444" strokeWidth="12" strokeDasharray="3 6" />
        <path d="M430 602h6v30h-6zM429 630h11v16h-11z" fill="#222" />
        <circle cx="606" cy="613" r="14" fill="#fff" />
        <path d="M606 620v-12M602 612l4-5 4 5" stroke="#222" strokeWidth="3" fill="none" />
        <path d="M601 580h12v16h-12z" fill="none" stroke="#333" strokeWidth="3" />
        <path d="M632 530v36" stroke="#333" strokeWidth="4" strokeDasharray="4 1" />
        <text x="474" y="561" fontSize="16" fontWeight="800" fill="#111">ASELFON M6</text>
        <path d="M585 545v20" stroke="#111" strokeWidth="2" />
        <path d="M590 563l9-17 5 17M606 548l3 6M611 546l2 5" stroke="#111" strokeWidth="3" fill="none" />
      </g>
      <Device y={422} name="Kabin Üstü" />
      <Device y={560} name="Kabin Butonyeri" />
      <Device y={693} name="Kuyu Dibi" />
      <path d="M293 718l17-28 8 28h-8l-4-14-6 14z" fill="#a8151b" />
      <path d="M320 690l10 17M327 690l8 13M334 690l6 9" stroke="#a8151b" strokeWidth="2" />
      <text x="310" y="747" fontSize="22" fontWeight="900" textAnchor="middle" fill="#111" fontFamily="'Liberation Serif', serif">ASELSİS</text>
      <circle cx="267" cy="761" r="5" fill="#333" />
      <text x="275" y="766" fontSize="11" fontWeight="600" fill="#333">0850 840 10 56</text>
      <rect x="247" y="772" width="124" height="34" rx="5" fill="none" stroke="#777" strokeWidth="2" />
      <path d="M252 780h20M252 790h20M252 800h20" stroke="#555" strokeWidth="2" />
      <path d="M276 780h86M276 790h88M276 800h80" stroke="#888" strokeWidth="3" strokeDasharray="10 2 6 2" />
      <text x="401" y="766" fontSize="18" fontWeight="700" fill="#222">ASELFON M6 BAĞLANTI ŞEMASI</text>
      <path d="M401 776h58" stroke="#222" strokeWidth="4" strokeDasharray="14 2" />
      <path d="M401 785h250M401 794h312M401 802h168" stroke="#777" strokeWidth="3" strokeDasharray="14 3 9 2 20 3" />
      <path d="M944 806h62" stroke="#aaa" strokeWidth="3" strokeDasharray="8 2" />
    </svg>
  );
}

function DialogButton({ children, className }: { children: React.ReactNode; className: string }) {
  return (
    <button type="button" className={`h-4 rounded-[3px] border bg-white text-center leading-[13px] whitespace-nowrap ${className}`}>
      {children}
    </button>
  );
}

function DialogSelect({ id, value }: { id: string; value: string }) {
  return (
    <div className="flex h-4 flex-1 border border-[#b4b4bc] bg-white">
      <select id={id} defaultValue={value} className="flex-1 appearance-none bg-transparent pl-[2px] text-[8px] outline-none">
        <option>{value}</option>
      </select>
      <span className="flex w-3 items-center justify-center border-l border-[#c8c8c8]">
        <Chevron color="#888" />
      </span>
    </div>
  );
}

function CaptionDialog() {
  return (
    <section aria-label="Resim Yazısı" className="absolute top-[124px] left-[355px] h-[174px] w-[246px] overflow-hidden rounded-[5px] bg-[#f0f0f0] text-[8px] leading-[10px] font-medium text-[#222]">
      <div className="flex h-[22px] items-center justify-between bg-[#f7f0fa] pr-12 pl-[6px]">
        <span>Resim Yazısı</span>
        <span className="font-semibold">?</span>
      </div>
      <div className="pt-[6px] pr-[5px] pl-1">
        <label htmlFor="cap" className="block">
          <Mnemonic text="Resi&m Yazısı:" />
        </label>
        <input id="cap" className="mt-px ml-[2px] block h-[15px] w-[205px] border border-[#a9a9b4] bg-white outline-none" />
        <div className="mt-[2px] flex items-center gap-1">
          Seçenekler
          <span className="h-px flex-1 bg-[#dcdcdc]" />
        </div>
        <div className="mt-1 flex items-center pl-[6px]">
          <label htmlFor="kind" className="w-[35px]">
            <Mnemonic text="&Etiket:" />
          </label>
          <DialogSelect id="kind" value="Resim" />
        </div>
        <div className="mt-[2px] flex items-center pl-[6px]">
          <label htmlFor="place" className="w-[35px]">
            <Mnemonic text="&Konum:" />
          </label>
          <DialogSelect id="place" value="Seçili öğenin altında" />
        </div>
        <label className="mt-[7px] flex items-center gap-[3px]">
          <input type="checkbox" className="h-[9px] w-[9px] appearance-none rounded-[2px] border border-[#777] bg-white" />
          <Mnemonic text="&Başlıktan etiketi çıkart" />
        </label>
        <div className="mt-[3px] flex justify-between">
          <DialogButton className="w-[99px] border-[#c5d6e8]">
            <Mnemonic text="&Yeni Etiket..." />
          </DialogButton>
          <DialogButton className="w-[54px] border-[#d5d5d5]">
            <Mnemonic text="Etiket &Sil..." />
          </DialogButton>
          <DialogButton className="w-[70px] border-[#d5d5d5]">
            <Mnemonic text="&Numaralandır..." />
          </DialogButton>
        </div>
        <div className="mt-[3px] h-px bg-[#e0e0e0]" />
        <div className="mt-2 flex">
          <DialogButton className="w-[99px] border-[#d5d5d5]">
            <Mnemonic text="&Otomatik Resim Yazısı..." />
          </DialogButton>
          <DialogButton className="ml-auto w-[54px] border-[#2f8fd8]">Tamam</DialogButton>
          <DialogButton className="ml-[7px] w-[54px] border-[#d5d5d5]">İptal</DialogButton>
        </div>
      </div>
    </section>
  );
}

function Backdrop() {
  return (
    <svg width="625" height="307" viewBox="0 0 625 307" fill="none" aria-hidden="true">
      <path d="M0 0h625v307H0z" fill="#262626" />
      <path d="M466 0h14v307h-14z" fill="#0a0a0a" />
      <path d="M442.5 0v307" stroke="#a8a8a8" />
      <path d="M465.5 0v307" stroke="#777" />
      <path d="M480.5 0v307" stroke="#555" />
      <path d="M530.5 0v307" stroke="#b4b4b4" />
      <circle cx="551" cy="19" r="2" fill="#ddd" />
      <circle cx="551" cy="77" r="2" fill="#ddd" />
      <path d="M566 190h59v117h-59z" fill="#151515" />
      <path d="M625 228l-6 6-7 32 13 1z" fill="#1b6b48" />
      <path d="M622 238l-5 24" stroke="#8ee0b0" strokeDasharray="2 2" />
      <path d="M610 272h15v12h-13z" fill="#2e2e2e" />
      <path d="M598 303l9-9 9 2 6-7" stroke="#3c3c3c" strokeWidth="2" />
      <path d="M607 297l3-2M617 291l2-2" stroke="#888" strokeWidth="2" />
    </svg>
  );
}

const handles = [
  "top-[-5px] left-[-6px]",
  "top-[-5px] left-[307px]",
  "top-[-5px] left-[619px]",
  "top-[148px] left-[-6px]",
  "top-[148px] left-[619px]",
  "top-[301px] left-[-6px]",
  "top-[301px] left-[307px]",
  "top-[301px] left-[619px]",
];

function Picture() {
  return (
    <figure className="relative mt-[11px] h-[307px] w-[625px]">
      <div className="relative h-full overflow-hidden border border-[#6a6a6a] font-['Liberation_Serif',serif] text-[12px] leading-4 text-[#dedede]">
        <div className="absolute -inset-px">
          <Backdrop />
        </div>
        <div className="relative -mt-[12px] w-[425px]">
          <p className="[text-align-last:justify]">gerçekleştirilen bağlantıların yapısı şeması gösterilmiştir ve sağlanır</p>
          <p className="-ml-[3px] whitespace-nowrap [text-align-last:justify]">ir. Bu analiz, Mekatronik sistemin çevresel otomasyon ile nasıl etkileşime girdiğini</p>
          <p className="-ml-[3px]">ektedir:</p>
          <div className="-mt-px ml-[61px]">
            <Wiring />
          </div>
          <p className="-mt-px ml-[54px] text-[17px] leading-6 font-bold whitespace-nowrap text-white">Resim 1: Aselfon M6 bağlantı Şeması</p>
          <p className="mt-2 whitespace-nowrap">
            <b>leme Bağlantısı:</b> Cihazın 12 VDC ile 40 VDC arasında bir besleme kaynağı
          </p>
          <p className="-ml-[3px] whitespace-nowrap">z 1.5A akım gereksinimi olduğu belirlenmiştir.</p>
          <p className="mt-[11px] whitespace-nowrap [text-align-last:justify]">
            <b>trik Kesintisi Girişi (Lojik Giriş):</b> Asansör panosunun 24V DC çıkışına bağlanan bu
          </p>
        </div>
        <p className="absolute top-[67px] left-[565px] text-[11px] font-bold whitespace-pre">B  PCB  (Ka</p>
        <p className="absolute top-[65px] left-[418px] font-['Noto_Sans',sans-serif] text-[#22b14c]">righ click</p>
        <div className="font-['Noto_Sans',sans-serif]">
          <CaptionDialog />
        </div>
      </div>
      <div className="absolute top-[-23px] left-[312px] h-[18px] w-px bg-[#666]" />
      <svg width="26" height="24" viewBox="0 0 26 24" fill="none" aria-hidden="true" className="absolute top-[-46px] left-[301px]">
        <path d="M17.500 18A8 8 0 1 1 19.500 10.500" stroke="#666" strokeWidth="4" />
        <path d="M17.500 18A8 8 0 1 1 19.500 10.500" stroke="#fff" strokeWidth="1.200" />
        <path d="M14 10.500h10.500l-5.500 6.500z" fill="#fff" stroke="#666" strokeWidth="1.800" />
        <path d="M14.500 9.500a3.600 3.600 0 1 0 1 4" stroke="#666" strokeWidth="1.500" />
      </svg>
      {handles.map((pos) => (
        <span key={pos} className={`absolute h-[11px] w-[11px] rounded-full border-2 border-[#5a5a5a] bg-white ${pos}`} />
      ))}
    </figure>
  );
}

function DocumentPage() {
  return (
    <article className="min-h-full border border-b-0 border-[#c6c6c6] bg-white pl-[95px] font-[Lato,sans-serif] text-[16px] leading-[23px] whitespace-nowrap text-black [font-variant-ligatures:none]">
      <div className="-ml-6 h-[95px] w-6 pt-[71px]">
        <div className="h-6 border-r border-b border-[#a6a6a6]" />
      </div>
      <div className="-mt-[3px] flex flex-col gap-[10px]">
        <p>
          Thank you for sharing your question and providing screenshots, they are very helpful.
          <br />
          Based on what you described, the issue occurs when adding captions to images in your
          <br />
          Word document: sometimes the caption appears as a white box or is not visible/editable,
          <br />
          while in other documents it works fine. This usually happens because of layout settings
          <br />
          restrictions in the template you received from your school.
        </p>
        <p>&nbsp;</p>
        <p>
          If the image is positioned using “Wrap Text” options like In Front of Text or Behind Text,
          <br />
          Word may insert the caption inside a text box or floating frame, causing the white box
          <br />
          effect.
        </p>
        <p>
          Some templates use tables, frames, or content controls to lock formatting, which can
          <br />
          interfere with automatic captions.
        </p>
        <p>
          If the document is in Compatibility{" "}
          <span className="underline decoration-[#2b6be0] decoration-double decoration-1 underline-offset-[3px]">Mode (.</span>
          doc) or has custom styles, caption behavior may
          <br />
          differ from a standard Word document.
        </p>
      </div>
      <Picture />
    </article>
  );
}

export default function App() {
  return (
    <div className="flex h-screen flex-col overflow-hidden bg-[#efefef] font-['Noto_Sans','Noto_Sans_CJK_JP',sans-serif]">
      <TitleBar />
      <Tabs />
      <Ribbon />
      <main className="flex min-h-0 flex-1 justify-center pt-[17px] pl-[45px]">
        <div className="relative h-full w-[816px] shrink-0">
          <DocumentPage />
          <ContextMenu />
          <MiniToolbar />
          <SubMenu />
          <Tooltip />
          <div className="pointer-events-none absolute top-[390px] left-[661px] h-[39px] w-[222px] border-[5px] border-[#22b14c]" />
        </div>
      </main>
    </div>
  );
}
